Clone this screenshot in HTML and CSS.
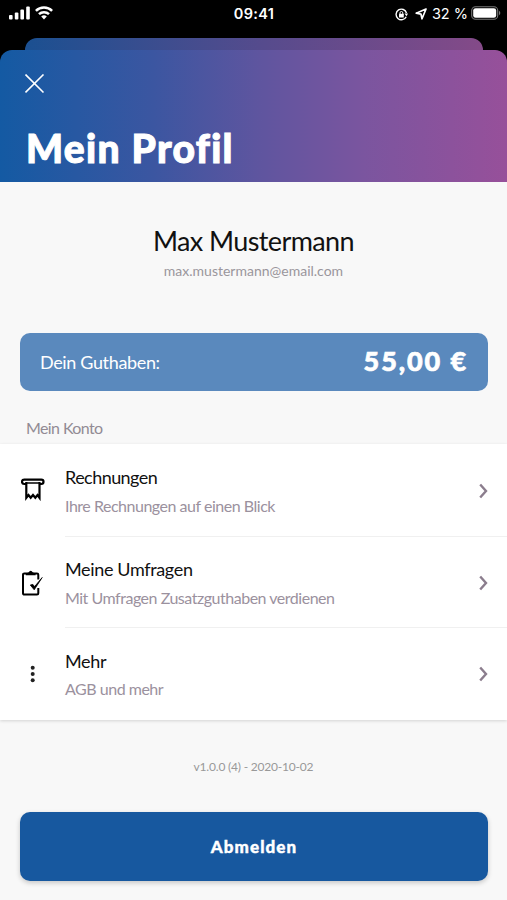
FILE: index.html
```html
<!DOCTYPE html>
<html lang="de">
<head>
<meta charset="utf-8">
<title>Mein Profil</title>
<link rel="stylesheet" href="styles.css">
</head>
<body>
<div class="status">
  <div class="status-left">
    <svg width="21" height="14" viewBox="0 0 21 14" fill="#fff"><rect x="0" y="9" width="3.6" height="4.6" rx="1"/><rect x="5.8" y="6.6" width="3.6" height="7" rx="1"/><rect x="11.4" y="3.6" width="3.6" height="10" rx="1"/><rect x="17.2" y="0.6" width="3.6" height="13" rx="1"/></svg>
    <svg width="18" height="14" viewBox="0 0 18 14" fill="none" stroke="#fff" stroke-width="2.5"><path d="M.9 4.9a11.5 11.500 0 0 1 16.200 0M4 8.200a7.100 7.100 0 0 1 10 0"/><path d="M9 13.400 6.200 10.600a4 4 0 0 1 5.600 0z" fill="#fff" stroke="none"/></svg>
  </div>
  <div class="status-time">09:41</div>
  <div class="status-right">
    <svg class="lock" width="13" height="13" viewBox="0 0 13 13" fill="none" stroke="#fff" stroke-width="1.4"><path d="M11.2 8.7A5.300 5.300 0 1 1 11.500 5"/><path d="m9.500 5.500 3.500 0-1.500 2.700z" fill="#fff" stroke="none"/><rect x="4" y="5.800" width="4.800" height="3.700" rx=".5" fill="#fff" stroke="none"/><path d="M5 6V4.900a1.400 1.400 0 0 1 2.800 0V6" stroke-width="1"/></svg>
    <svg class="nav" width="12" height="12" viewBox="0 0 12 12" fill="none" stroke="#fff" stroke-width="1.700" stroke-linejoin="round"><path d="M11 1 1.200 5.200 6 6.200 7 10.800z"/></svg>
    <span class="percent">32 %</span>
    <svg class="battery" width="30" height="14" viewBox="0 0 30 14"><rect x=".7" y=".7" width="26" height="12.600" rx="3.800" fill="none" stroke="#777" stroke-width="1.100"/><rect x="2.200" y="2.200" width="23" height="9.600" rx="2.400" fill="#fff"/><path d="M28 4.800a2.500 2.500 0 0 1 0 4.400z" fill="#777"/></svg>
  </div>
</div>
<div class="back-card"></div>
<main class="sheet">
  <header class="hero">
    <svg class="close" width="20" height="20" viewBox="0 0 20 20" stroke="#fff" stroke-width="1.600"><path d="m.5 .5 18 18M18.500 .5 .5 18.500"/></svg>
    <h1 class="title">Mein Profil</h1>
  </header>
  <section class="person">
    <div class="name">Max Mustermann</div>
    <div class="email">max.mustermann@email.com</div>
  </section>
  <section class="balance">
    <span class="balance-label">Dein Guthaben:</span>
    <span class="balance-value">55,00 €</span>
  </section>
  <h2 class="section-label">Mein Konto</h2>
  <nav class="list">
    <a class="row invoices">
      <svg class="icon" width="24" height="24" viewBox="0 0 24 24" fill="none" stroke="#000" stroke-width="2.200"><path d="M5 7H3.200a2.200 2.200 0 0 1 0-4.400H20.300a2.200 2.200 0 0 1 0 4.400H19"/><path d="M5 6H19" stroke-width="1.500"/><path d="M5.300 5V20.800l2.200-2.800 2.200 2.800 2.300-2.800 2.300 2.800 2.200-2.800L18.500 20.800V5"/></svg>
      <div class="text"><div class="head">Rechnungen</div><div class="sub">Ihre Rechnungen auf einen Blick</div></div>
      <svg class="chev" width="10" height="16" viewBox="0 0 10 16" fill="none" stroke="#8b7d8d" stroke-width="2.400"><path d="m1.200 1.500 5.800 6.500-5.800 6.500"/></svg>
    </a>
    <a class="row surveys">
      <svg class="icon" width="24" height="26" viewBox="0 0 24 26" fill="none" stroke="#000" stroke-width="2"><path d="M17.300 9.500V4.700a1.300 1.300 0 0 0-1.300-1.300H3.300A1.300 1.300 0 0 0 2 4.700V23.300a1.300 1.300 0 0 0 1.300 1.300H16a1.300 1.300 0 0 0 1.300-1.300V18"/><path d="M4.800 5.200V3.600L7.500 2.600Q9.700-1.200 11.900 2.600l2.700 1v1.600z" fill="#000" stroke="none"/><path d="m9.300 15 2.600-.6 1.700 2.200L21.200 7.500 13.200 19.800z" fill="#000" stroke-width=".8"/></svg>
      <div class="text"><div class="head">Meine Umfragen</div><div class="sub">Mit Umfragen Zusatzguthaben verdienen</div></div>
      <svg class="chev" width="10" height="16" viewBox="0 0 10 16" fill="none" stroke="#8b7d8d" stroke-width="2.400"><path d="m1.200 1.500 5.800 6.500-5.800 6.500"/></svg>
    </a>
    <a class="row more">
      <svg class="icon" width="24" height="24" viewBox="0 0 24 24" fill="#222"><circle cx="11.700" cy="5.700" r="2"/><circle cx="11.700" cy="12" r="2"/><circle cx="11.700" cy="18.300" r="2"/></svg>
      <div class="text"><div class="head">Mehr</div><div class="sub">AGB und mehr</div></div>
      <svg class="chev" width="10" height="16" viewBox="0 0 10 16" fill="none" stroke="#8b7d8d" stroke-width="2.400"><path d="m1.200 1.500 5.800 6.500-5.800 6.500"/></svg>
    </a>
  </nav>
  <div class="version">v1.0.0 (4) - 2020-10-02</div>
  <button class="logout">Abmelden</button>
</main>
</body>
</html>
```
FILE: styles.css
```css
* { box-sizing: border-box; }
body { margin: 0; height: 900px; overflow: hidden; background: #000; font-family: Lato, "Liberation Sans", sans-serif; color: #111; display: flex; flex-direction: column; }
svg { display: block; flex: none; }
.status { height: 38px; flex: none; display: grid; grid-template-columns: 1fr auto 1fr; padding: 0 6px 0 9px; color: #fff; font: 500 14px/28px Inter, sans-serif; }
.status-left { display: flex; gap: 5px; padding-top: 6px; }
.status-time { font-weight: 600; font-size: 14.5px; letter-spacing: .35px; margin-right: 2px; }
.status-right { display: flex; justify-content: flex-end; }
.lock { margin: 8px 7px 0 0; }
.nav { margin: 8px 5px 0 0; }
.percent { margin-right: 3px; white-space: nowrap; font-weight: 400; font-size: 14.5px; }
.battery { margin-top: 6px; }
.back-card { height: 12px; flex: none; margin: 0 24px 0 25px; border-radius: 12px 12px 0 0; background: linear-gradient(90deg, #1b5091, #564b8d 52%, #844a88); }
.sheet { flex: 1; background: linear-gradient(transparent 60px, #f8f8f8 60px); display: flex; flex-direction: column; }
.hero { height: 132px; flex: none; padding: 24px 25px 0; border-radius: 12px 12px 0 0; background: linear-gradient(90deg, #145aa3, #3b56a1 30%, #60559f 52%, #7b559f 72%, #97509a); }
.title { margin: 30px 0 0 1px; font-size: 39px; line-height: 48px; font-weight: 900; letter-spacing: 1.3px; color: #fff; -webkit-text-stroke: 1px #fff; }
.person { text-align: center; padding-top: 42px; height: 151px; flex: none; }
.name { font-size: 27px; line-height: 34px; letter-spacing: -.6px; color: #111; }
.email { font-size: 14px; line-height: 20px; color: #9a969c; margin-top: 3px; }
.balance { height: 58px; flex: none; margin: 0 19px 0 20px; padding: 0 20px; border-radius: 10px; background: #5a89bd; color: #fff; display: flex; align-items: center; justify-content: space-between; }
.balance-label { font-size: 18px; letter-spacing: -.35px; }
.balance-value { font-size: 27px; line-height: 34px; margin-bottom: 2px; font-weight: 900; letter-spacing: 1.9px; -webkit-text-stroke: .7px #fff; }
.section-label { margin: 26px 0 0 26px; height: 27px; font-size: 16px; line-height: 22px; letter-spacing: -.6px; font-weight: 400; color: #928b94; }
.list { background: #fff; box-shadow: 0 1px 3px rgba(0,0,0,.15); flex: none; display: flex; flex-direction: column; }
.row { height: 92px; display: flex; align-items: center; padding: 0 18px 0 21px; }
.text { flex: 1; align-self: stretch; margin-left: 20px; margin-right: -28px; padding-top: 20px; border-bottom: 1px solid #f0f0f0; white-space: nowrap; }
.head { font-size: 18px; line-height: 24px; letter-spacing: -.35px; }
.sub { font-size: 16px; line-height: 22px; letter-spacing: -.48px; color: #9b919e; margin-top: 6px; }
.invoices { height: 93px; }
.invoices .text { padding-top: 21px; }
.invoices .head { letter-spacing: -.55px; }
.invoices .icon { margin-bottom: 4px; }
.surveys { height: 91px; }
.more .text { border: 0; padding-top: 21px; }
.more .sub { margin-top: 5px; }
.more .icon, .more .chev { margin-bottom: 1px; }
.version { text-align: center; font-size: 12px; line-height: 16px; letter-spacing: -.2px; color: #999; margin-top: 39px; }
.logout { margin: 37px 19px 0 20px; height: 69px; border: 0; border-radius: 10px; background: #17589f; color: #fff; font: 900 17px Lato, sans-serif; letter-spacing: 1.1px; -webkit-text-stroke: .4px #fff; box-shadow: 0 2px 5px rgba(0,0,0,.2); }
```
